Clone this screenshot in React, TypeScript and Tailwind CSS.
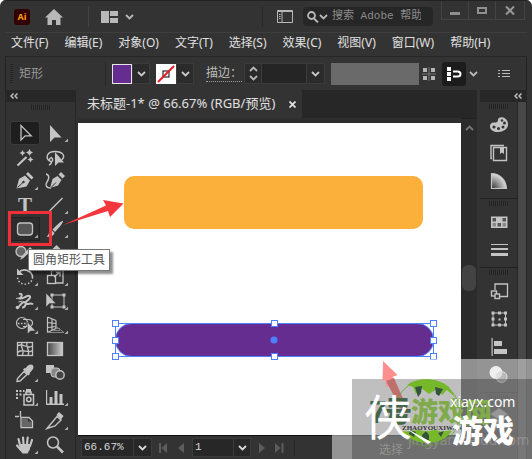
import React from "react";

const MENUS = [
  "文件(F)",
  "编辑(E)",
  "对象(O)",
  "文字(T)",
  "选择(S)",
  "效果(C)",
  "视图(V)",
  "窗口(W)",
  "帮助(H)",
];

interface Tool {
  name: string;
  icon: React.ReactNode;
  more?: boolean;
  active?: boolean;
}

const TOOLS: Tool[] = [
  {
    name: "选择工具",
    active: true,
    icon: <path d="M8 4.5v14.5l4.2-4.2h6z" fill="none" stroke="#c4c4c4" strokeWidth="1.3" />,
  },
  {
    name: "直接选择工具",
    more: true,
    icon: <path d="M7 4v17l4.5-4.5h7z" />,
  },
  {
    name: "魔棒工具",
    icon: (
      <>
        <path d="M4.5 20.5L13.5 12" stroke="#c4c4c4" strokeWidth="2.2" />
        <path d="M9.5 5l1 2 2 1-2 1-1 2-1-2-2-1 2-1zM16.5 4l1.2 2.3L20 7.5l-2.3 1.2L16.5 11l-1.2-2.3L13 7.5l2.3-1.2zM17.5 11.500l1 2 2 1-2 1-1 2-1-2-2-1 2-1z" />
      </>
    ),
  },
  {
    name: "套索工具",
    icon: (
      <>
        <path
          d="M7.500 16.500C1.500 13 4 6.500 12 6.500s11 5 6.500 8.500M9 12.500c-3 0-3.500 4-1 4s2-3 .5-3.500M8.500 16.500c0 2-1 3-2.500 3.500"
          fill="none"
          stroke="#c4c4c4"
          strokeWidth="1.4"
        />
        <path d="M12 7v14l3.500-3.500H21z" />
      </>
    ),
  },
  {
    name: "钢笔工具",
    more: true,
    icon: (
      <>
        <path d="M3.500 19.500L6 10l6-3.500 5 5-3.500 6zM13 5l2-2 5.500 5.500-2 2z" />
        <path d="M4.500 18.500l5.500-5" stroke="#333" />
        <circle cx="10.5" cy="13" r="1.2" fill="#333" />
      </>
    ),
  },
  {
    name: "曲率工具",
    icon: (
      <>
        <path d="M3 5c4 1 3 5 1 8s-1 6 4 6" fill="none" stroke="#c4c4c4" strokeWidth="1.4" />
        <path d="M7 19l2.500-9 5-3 4 4-3.500 5.500zM15.500 5.500L18 3l4 4-2.500 2.500z" />
        <path d="M8 18.500l5-5" stroke="#333" />
      </>
    ),
  },
  {
    name: "文字工具",
    more: true,
    icon: (
      <text x="12" y="19" textAnchor="middle" fontFamily="Liberation Serif, serif" fontWeight="bold" fontSize="21">
        T
      </text>
    ),
  },
  {
    name: "直线段工具",
    more: true,
    icon: <path d="M6.500 18L19.500 5" stroke="#c4c4c4" strokeWidth="1.5" />,
  },
  {
    name: "圆角矩形工具",
    more: true,
    active: true,
    icon: <rect x="4.5" y="6" width="15" height="12" rx="3" fill="#555" stroke="#c4c4c4" strokeWidth="1.3" />,
  },
  {
    name: "画笔工具",
    more: true,
    icon: <path d="M20 4c1 1-6 9-8 11l-2.500-2.500C12 10 18.500 3 20 4zM9 13.500l2.500 2.500c-1 3-4 4.500-8 3.500 2.500-1 2-5 5.500-6z" />,
  },
  {
    name: "Shaper 工具",
    more: true,
    icon: (
      <>
        <circle cx="8" cy="10.5" r="5" fill="#666" stroke="#c4c4c4" strokeWidth="1.3" />
        <path d="M7 19l2-4 8-9 2.500 2.500-9 8.500z" />
      </>
    ),
  },
  {
    name: "橡皮擦工具",
    more: true,
    icon: <path d="M13.500 4l6 6-8 8-6-6z" />,
  },
  {
    name: "旋转工具",
    more: true,
    icon: (
      <>
        <path d="M5.500 7.500C11 2 19 6 19.500 12" fill="none" stroke="#c4c4c4" strokeWidth="1.6" />
        <path d="M19.500 12c0 9-14 10-15 .5" fill="none" stroke="#c4c4c4" strokeWidth="1.5" strokeDasharray="1.5 2" />
        <path d="M4 3.500v6.500h6.500z" />
      </>
    ),
  },
  {
    name: "比例缩放工具",
    more: true,
    icon: (
      <g fill="none" stroke="#c4c4c4" strokeWidth="1.3">
        <path d="M8.500 10V5.500H20V18h-7" />
        <rect x="4.5" y="10.5" width="8" height="8" />
        <path d="M11 12l5.500-4.500M13 7.500h4v4" />
      </g>
    ),
  },
  {
    name: "宽度工具",
    more: true,
    icon: (
      <>
        <path
          d="M6 5c4-1 3 3 1 4.500 4 1 8-5 10-2 1.500 2.500-6 5-4 7s5-2 7 1M3.500 18c3 2 4-5 7.500-5s1 6-2 5.500"
          fill="none"
          stroke="#c4c4c4"
          strokeWidth="2"
        />
        <path d="M3 9.500l5-1M5.500 13l4-1" stroke="#c4c4c4" />
        <circle cx="4.5" cy="18.5" r="1.8" />
      </>
    ),
  },
  {
    name: "自由变换工具",
    more: true,
    icon: (
      <>
        <rect x="9" y="6" width="12" height="12" fill="none" stroke="#c4c4c4" />
        <path d="M7.500 4.500h3v3h-3zM19.500 4.500h3v3h-3zM7.500 16.500h3v3h-3zM19.500 16.500h3v3h-3z" />
        <path d="M3 4v14l3.500-3.500H13z" stroke="#333" strokeWidth=".5" />
      </>
    ),
  },
  {
    name: "形状生成器工具",
    more: true,
    icon: (
      <>
        <circle cx="9" cy="10" r="5.5" fill="none" stroke="#c4c4c4" strokeWidth="1.2" />
        <path d="M10 6.500h5c6 0 6 7 0 7h-5" fill="none" stroke="#c4c4c4" strokeWidth="1.2" />
        <path d="M5 10.500h11" stroke="#c4c4c4" strokeWidth="1.5" strokeDasharray="1.5 1.5" />
        <path d="M14.500 9v12l3-3h5z" stroke="#333" strokeWidth=".5" />
      </>
    ),
  },
  {
    name: "透视网格工具",
    more: true,
    icon: (
      <g fill="none" stroke="#c4c4c4">
        <path d="M4.500 4v15.500M9 5.500v12M13 7.500v8M4.500 4l8.500 3.500M4.500 9.500l8.500 1M4.500 14.500l8.500-1M4.500 19.500l8.500-4" strokeWidth="1.2" />
        <path d="M13 13.500l8 6M9 17.500h8M6 19.500h15M13 15.500h4" stroke="#888" />
      </g>
    ),
  },
  {
    name: "网格工具",
    icon: (
      <g fill="none" stroke="#c4c4c4" strokeWidth="1.3">
        <rect x="4.5" y="5.5" width="15" height="13" />
        <path d="M4.500 9c5-4 10 4 15 0M4.500 15.500c5-5 10 2 15-2M9 5.500c-3 5 4 8 0 13M14 5.500c-2 5 4 7 1 13" />
      </g>
    ),
  },
  {
    name: "渐变工具",
    icon: (
      <>
        <defs>
          <linearGradient id="toolGradient">
            <stop offset="0" stopColor="#444" />
            <stop offset="1" stopColor="#ccc" />
          </linearGradient>
        </defs>
        <rect x="4.5" y="5.5" width="15" height="13" fill="url(#toolGradient)" stroke="#c4c4c4" strokeWidth="1.3" />
      </>
    ),
  },
  {
    name: "吸管工具",
    more: true,
    icon: (
      <>
        <path d="M11 10.500l3 3L7 20l-3 .5.500-3z" fill="none" stroke="#c4c4c4" strokeWidth="1.4" />
        <path d="M10 8.500l1.500-1.500 1 .5C14 5 16 3.500 18 3.500c2.500 0 3 3 2 4.500s-2.500 3-3.500 4l.5 1-1.500 1.500z" />
      </>
    ),
  },
  {
    name: "混合工具",
    icon: (
      <>
        <rect x="3" y="4" width="8" height="8" />
        <rect x="8" y="7" width="9" height="9" rx="3" fill="#888" stroke="#c4c4c4" />
        <circle cx="17" cy="14" r="4.2" fill="#444" stroke="#c4c4c4" strokeWidth="1.4" />
      </>
    ),
  },
  {
    name: "符号喷枪工具",
    more: true,
    icon: (
      <>
        <path d="M3 5h2v2H3zM6.500 5h2v2h-2zM3 8.500h2v2H3zM6.500 8.500h2v2h-2zM3 12h2v2H3zM10 5h1.500v2H10zM13 4h5v3h-5z" />
        <path d="M11 9.500h9.500V20H11zM13 9V7h5v2" fill="none" stroke="#c4c4c4" strokeWidth="1.5" />
        <circle cx="15.8" cy="14.5" r="2.2" fill="none" stroke="#c4c4c4" strokeWidth="1.5" />
      </>
    ),
  },
  {
    name: "柱形图工具",
    more: true,
    icon: <path d="M3 5h1.200v13.500H21V20H3zM6.500 12h3v7h-3zM11.500 6h3v13h-3zM16.500 9h3v10h-3z" />,
  },
  {
    name: "画板工具",
    icon: (
      <>
        <path d="M7.500 2v6M2 7.500h4M8 8.500h8l3.500 3.500v6.500H8z" fill="none" stroke="#c4c4c4" strokeWidth="1.3" />
        <path d="M9 9.500h6v3h4V18H9z" fill="#666" />
      </>
    ),
  },
  {
    name: "切片工具",
    more: true,
    icon: (
      <>
        <path d="M4 19.500L14 7.500l4 3.500-6 6z" fill="none" stroke="#c4c4c4" strokeWidth="1.4" />
        <path d="M13.500 6L16 3l4.500 4-2.500 3.500z" />
      </>
    ),
  },
  {
    name: "抓手工具",
    more: true,
    icon: (
      <>
        <path d="M7 12L5.500 6M10.500 11L10 4.500M14 11l.7-6.500M17 13l2-6M8 17l-4-4.500" stroke="#c4c4c4" strokeWidth="2.2" strokeLinecap="round" />
        <path d="M6.500 11h11.300l-1 5.500-2.300 4H9.500L6 16z" />
      </>
    ),
  },
  {
    name: "缩放工具",
    icon: (
      <>
        <circle cx="10" cy="9.5" r="5.5" fill="none" stroke="#c4c4c4" strokeWidth="1.5" />
        <path d="M14 13.500l6 6" stroke="#c4c4c4" strokeWidth="2.5" />
      </>
    ),
  },
];

const DOCK: Tool[][] = [
  [
    {
      name: "颜色",
      icon: (
        <>
          <path d="M3 13.500C3 10 5.500 9.500 7.500 9.500c2 0 3.500-.5 3.500-2.500S13 4 16 4.500s5.500 4 5 7.500c-.5 4-4.500 7-10 7-4.500 0-8-2-8-5.500z" />
          <g fill="#333">
            <circle cx="7" cy="14" r="1.6" />
            <circle cx="11.5" cy="15.5" r="1.5" />
            <circle cx="16" cy="14" r="1.5" />
            <circle cx="17.5" cy="10" r="1.5" />
            <circle cx="15" cy="7.5" r="1.2" />
          </g>
        </>
      ),
    },
    {
      name: "库",
      icon: (
        <>
          <path d="M5 17.500H4v-13h13M7 6.500h12.500v13H6.500V6.500z" fill="none" stroke="#c4c4c4" strokeWidth="1.4" />
          <path d="M13 6h4v7l-2-1.500-2 1.500z" />
        </>
      ),
    },
    {
      name: "颜色参考",
      icon: (
        <>
          <defs>
            <radialGradient id="dockGuide" cx="0" cy="1" r="1">
              <stop offset="0" stopColor="#333" />
              <stop offset="1" stopColor="#ddd" />
            </radialGradient>
          </defs>
          <path d="M4.500 4.500c8 0 14.500 6 15 15h-15z" fill="url(#dockGuide)" stroke="#c4c4c4" strokeWidth="1.2" />
        </>
      ),
    },
  ],
  [
    {
      name: "色板",
      icon: (
        <>
          <path d="M4 6.500h16.500v11.500H4z" />
          <path d="M5.500 8h3.500v3.500H5.500zM15.500 8H19v3.500h-3.500zM10.500 13H14v3.500h-3.500z" fill="#555" />
          <path d="M5.500 13h3.500v3.500H5.500zM15.500 13H19v3.500h-3.500z" fill="#888" />
        </>
      ),
    },
    {
      name: "描边",
      icon: <path d="M4 6h17v1H4zM4 10h17v2H4zM4 15h17v3H4z" />,
    },
  ],
  [
    {
      name: "资源导出",
      icon: (
        <>
          <path d="M8 11V5h12.500v12.500H13" fill="none" stroke="#c4c4c4" strokeWidth="1.3" />
          <rect x="4.5" y="12" width="5" height="5" fill="#333" stroke="#c4c4c4" strokeWidth="1.4" />
          <rect x="8" y="15" width="4.5" height="4.5" fill="#333" stroke="#c4c4c4" strokeWidth="1.4" />
        </>
      ),
    },
    {
      name: "变换",
      icon: (
        <>
          <rect x="6" y="6" width="12.5" height="12" fill="none" stroke="#c4c4c4" />
          <path d="M4.500 4.500h3v3h-3zM11 4.500h3v3h-3zM17 4.500h3v3h-3zM4.500 10.500h3v3h-3zM17 10.500h3v3h-3zM4.500 16.500h3v3h-3zM11 16.500h3v3h-3zM17 16.500h3v3h-3zM11.500 11.500h2v2h-2z" />
        </>
      ),
    },
    {
      name: "对齐",
      icon: <path d="M4.500 3h1.200v18H4.500zM7 6h8v5H7zM7 14h13v5H7z" />,
    },
    {
      name: "透明度",
      icon: (
        <>
          <circle cx="9" cy="9.5" r="6.5" fill="#e0e0e0" />
          <circle cx="14.5" cy="14" r="5.5" fill="#aaa" fillOpacity=".6" stroke="#c4c4c4" />
        </>
      ),
    },
  ],
  [
    {
      name: "图层",
      icon: <path d="M12 4l9 6-9 6-9-6zM3 14l9 6 9-6" fill="#999" stroke="#555" />,
    },
  ],
];

function Chevron({ up }: { up?: boolean }) {
  return (
    <svg
      width="9"
      height="6"
      viewBox="0 0 9 6"
      fill="none"
      stroke="currentColor"
      strokeWidth="1.8"
      className="shrink-0"
    >
      <path d={up ? "M1 5l3.500-3.500L8 5" : "M1 1l3.500 3.500L8 1"} />
    </svg>
  );
}

function Collapse() {
  return (
    <svg width="8" height="6" viewBox="0 0 8 6" fill="none" stroke="#bbb" strokeWidth="1.5">
      <path d="M3.500.5L1 3l2.500 2.500M7.500.5L5 3l2.500 2.500" />
    </svg>
  );
}

function Grip() {
  return <div className="h-[5px] w-5 bg-[repeating-linear-gradient(90deg,#222_0_1px,#363636_1px_2px)]" />;
}

function DropButton({ label }: { label: string }) {
  return (
    <button
      aria-label={label}
      className="flex h-[21px] w-[18px] items-center justify-center border border-[#3b3b3b] bg-[#2b2b2b] text-[#c8c8c8]"
    >
      <Chevron />
    </button>
  );
}

function TitleBar() {
  return (
    <header className="flex h-8 items-center border-t border-[#222] pl-3.5">
      <span className="flex h-4 w-4 items-center justify-center rounded-[3px] bg-[#330000] text-[9px] font-bold text-[#ff9a00]">
        Ai
      </span>
      <button aria-label="主页" className="ml-3.5">
        <svg width="20" height="16" viewBox="0 0 20 16" fill="#b8b8b8">
          <path d="M10 0l9 8.500h-2.500V16H12v-5H8v5H3.500V8.500H1z" />
        </svg>
      </button>
      <span className="ml-6 h-5 w-px bg-[#444]" />
      <button aria-label="排列文档" className="ml-3 flex items-center gap-1.5 text-[#b8b8b8]">
        <svg width="18" height="12" viewBox="0 0 18 12" fill="#b8b8b8">
          <path d="M0 0h8v12H0zM9 0h8v5H9zM9 7h8v5H9z" />
        </svg>
        <Chevron />
      </button>
      <span className="flex-1" />
      <span className="h-5 w-px bg-[#282828]" />
      <button aria-label="切换工作区" className="ml-3.5">
        <svg width="16" height="13" viewBox="0 0 16 13" fill="none" stroke="#b8b8b8">
          <path d="M.5.5h15v12H.5zM.5 1.500h15M5 1v11M2 4.500h1.500M2 6.500h1.500M2 8.500h1.500" />
        </svg>
      </button>
      <label className="ml-2.5 flex h-[19px] w-[130px] items-center rounded-sm bg-[#262626] pl-1 text-[#b8b8b8]">
        <svg
          width="12"
          height="12"
          viewBox="0 0 12 12"
          fill="none"
          stroke="#b8b8b8"
          strokeWidth="1.8"
          className="shrink-0"
        >
          <circle cx="4.5" cy="4.5" r="3.5" />
          <path d="M7 7.500l4 4" />
        </svg>
        <Chevron />
        <input
          type="search"
          aria-label="搜索 Adobe 帮助"
          placeholder="搜索 Adobe 帮助"
          className="ml-1 w-full min-w-0 bg-transparent font-['Liberation_Mono','Noto_Sans_CJK_SC',monospace] text-[11px] outline-none placeholder:text-[#8c8c8c]"
        />
      </label>
      <div className="mr-[7px] ml-2 flex h-[19px] self-start border-x border-b border-[#444] text-[#8f8f8f]">
        <button aria-label="最小化" className="flex w-[27px] items-center justify-center border-r border-[#444]">
          <span className="mt-1.5 h-[3px] w-2.5 bg-[#8f8f8f]" />
        </button>
        <button aria-label="最大化" className="flex w-[27px] items-center justify-center border-r border-[#444]">
          <span className="h-[7px] w-2.5 border-2 border-[#8f8f8f]" />
        </button>
        <button aria-label="关闭" className="flex w-[28px] items-center justify-center">
          <svg width="10" height="9" viewBox="0 0 10 9" stroke="#999" strokeWidth="2">
            <path d="M1 .5l8 8M9 .5l-8 8" />
          </svg>
        </button>
      </div>
    </header>
  );
}

function ControlBar() {
  return (
    <div className="mx-[5px] flex h-[34px] items-center border-x border-t border-[#222] border-t-[#262626] pl-1 text-xs">
      <span className="h-5 w-[3px] bg-[repeating-linear-gradient(#222_0_1px,#363636_1px_2px)]" />
      <span className="ml-1.5 w-[86px] text-[#999]">矩形</span>
      <span className="h-6 w-px bg-[#282828]" />
      <button aria-label="填色" className="ml-1.5 h-5 w-5 border border-[#e6e6e6] bg-[#662d91]" />
      <DropButton label="填色选项" />
      <button aria-label="描边颜色" className="ml-1.5 h-5 w-5 bg-white">
        <svg width="20" height="20" viewBox="0 0 20 20" fill="none">
          <rect x="7" y="7" width="6" height="6" stroke="#000" />
          <path d="M2 18L18 2" stroke="#e81c24" strokeWidth="2" />
        </svg>
      </button>
      <DropButton label="描边选项" />
      <label
        htmlFor="stroke"
        className="ml-3 border-b border-dotted border-[#999] leading-4 whitespace-nowrap text-[#bdbdbd]"
      >
        描边：
      </label>
      <div className="ml-0.5 flex h-[21px] border border-[#3b3b3b] bg-[#2b2b2b] text-[#b8b8b8]">
        <div className="flex w-4 flex-col items-center justify-between py-0.5">
          <button aria-label="增加">
            <Chevron up />
          </button>
          <button aria-label="减少">
            <Chevron />
          </button>
        </div>
        <input id="stroke" className="w-[46px] border-x border-[#3b3b3b] bg-[#252525] outline-none" />
        <button aria-label="描边粗细" className="flex w-[17px] items-center justify-center text-[#c8c8c8]">
          <Chevron />
        </button>
      </div>
      <div className="ml-1.5 h-[22px] flex-1 bg-[#6a6a6a]" />
      <button aria-label="参考点" className="ml-[3px]">
        <svg width="14" height="14" viewBox="0 0 14 14" fill="#b5b5b5">
          <path d="M1 1h4v4H1zM9 1h4v4H9zM1 9h4v4H1zM9 9h4v4H9z" />
          <path d="M7 0v14M0 7h14" stroke="#777" />
        </svg>
      </button>
      <button aria-label="对齐像素" className="ml-1.5 flex h-6 w-6 items-center justify-center rounded-[3px] bg-[#1c1c1c]">
        <svg width="15" height="14" viewBox="0 0 15 14" fill="#fff">
          <path d="M0 0h4v4H0zM0 5h4v4H0zM0 10h4v4H0z" />
          <path d="M6 4.500h4.500c4 0 4 5 0 5H6" fill="none" stroke="#fff" strokeWidth="2" />
        </svg>
      </button>
      <button aria-label="对齐选项" className="ml-[3px] text-[#b8b8b8]">
        <Chevron />
      </button>
      <button aria-label="面板菜单" className="mr-4 ml-5">
        <svg width="12" height="9" viewBox="0 0 12 9" fill="none" stroke="#bbb">
          <path d="M0 1.500h2M4 1.500h8M0 4.500h2M4 4.500h8M0 7.500h2M4 7.500h8" />
        </svg>
      </button>
    </div>
  );
}

function ToolBox() {
  return (
    <aside className="flex w-[71px] shrink-0 flex-col border-x border-[#262626]">
      <div className="flex h-3 items-center bg-[#272727] pl-1">
        <Collapse />
      </div>
      <div className="flex h-[19px] justify-center pt-[3px]">
        <Grip />
      </div>
      <div className="grid grid-cols-[30px_30px] pb-0.5 pl-1">
        {TOOLS.map((tool, i) => (
          <button
            key={tool.name}
            aria-label={tool.name}
            className={
              tool.active
                ? i === 0
                  ? "flex h-6 items-center justify-center rounded-[3px] border border-[#3a3a3a] bg-[#1e1e1e]"
                  : "flex h-6 items-center justify-center border border-[#222] bg-[#2c2c2c]"
                : "flex h-6 items-center justify-center"
            }
          >
            <svg width="28" height="24" viewBox="-2 0 28 24" fill="#c4c4c4" className="shrink-0">
              {tool.icon}
              {tool.more ? <path d="M25 17.500v3.500h-3.500z" fill="#aaa" /> : null}
            </svg>
          </button>
        ))}
      </div>
    </aside>
  );
}

function Artwork() {
  const handles = [
    [37.5, 200.5],
    [196.5, 200.5],
    [355.5, 200.5],
    [37.5, 217.5],
    [355.5, 217.5],
    [37.5, 233.5],
    [196.5, 233.5],
    [355.5, 233.5],
  ];
  return (
    <svg width="383" height="312" viewBox="0 0 383 312" className="block shrink-0">
      <rect x="46" y="53" width="299" height="53" rx="10" fill="#fbb03b" />
      <rect x="37.5" y="200.5" width="318" height="33" rx="16" fill="#662d91" stroke="#4f80ff" />
      <rect x="37.5" y="200.5" width="318" height="33" fill="none" stroke="#4f80ff" />
      <circle cx="196" cy="217" r="3.5" fill="#4f80ff" />
      {handles.map(([x, y]) => (
        <rect key={`${x}-${y}`} x={x - 3} y={y - 3} width="6" height="6" fill="#fff" stroke="#4f80ff" />
      ))}
    </svg>
  );
}

function StatusBar() {
  return (
    <footer className="flex h-6 items-center border-t border-[#111] bg-[#333] pl-[3px] font-['Liberation_Mono',monospace] text-[11px] text-[#d8d8d8]">
      <div className="flex h-[19px] border border-[#3b3b3b] bg-[#272727]">
        <input aria-label="缩放比例" defaultValue="66.67%" className="w-[51px] pl-0.5 outline-none" />
        <button aria-label="缩放选项" className="flex w-[18px] items-center justify-center border-l border-[#3b3b3b]">
          <Chevron />
        </button>
      </div>
      <div className="ml-[7px] flex gap-2.5 text-[#5c5c5c]">
        <button aria-label="首项">
          <svg width="9" height="10" viewBox="0 0 9 10" fill="currentColor">
            <path d="M0 0h2v10H0zM8 0v10L2.500 5z" />
          </svg>
        </button>
        <button aria-label="上一项">
          <svg width="6" height="10" viewBox="0 0 6 10" fill="currentColor">
            <path d="M6 0v10L0 5z" />
          </svg>
        </button>
      </div>
      <div className="ml-2 flex h-[19px] border border-[#3b3b3b] bg-[#272727]">
        <input aria-label="画板" defaultValue="1" className="w-10 pl-0.5 outline-none" />
        <button aria-label="画板列表" className="flex w-[17px] items-center justify-center border-l border-[#3b3b3b]">
          <Chevron />
        </button>
      </div>
      <div className="ml-2 flex gap-2.5 text-[#5c5c5c]">
        <button aria-label="下一项">
          <svg width="6" height="10" viewBox="0 0 6 10" fill="currentColor">
            <path d="M0 0v10l6-5z" />
          </svg>
        </button>
        <button aria-label="末项">
          <svg width="9" height="10" viewBox="0 0 9 10" fill="currentColor">
            <path d="M0 0v10l5.500-5zM6.500 0h2v10h-2z" />
          </svg>
        </button>
      </div>
      <span className="ml-2.5 h-4 w-px bg-[#272727]" />
    </footer>
  );
}

function DocumentArea() {
  return (
    <main className="ml-0.5 flex min-w-0 flex-1 flex-col bg-[#272727]">
      <div className="flex h-7">
        <div className="flex items-center gap-3.5 bg-[#333] pr-1.5 pl-[9px] text-[#e0e0e0]">
          <h1 className="text-[13px] whitespace-nowrap">未标题-1* @ 66.67% (RGB/预览)</h1>
          <button aria-label="关闭文档">
            <svg width="7" height="7" viewBox="0 0 7 7" stroke="#e0e0e0" strokeWidth="1.8">
              <path d="M.5.5l6 6M6.500.5l-6 6" />
            </svg>
          </button>
        </div>
      </div>
      <div className="flex flex-1">
        <div className="min-w-0 flex-1 border-t-[5px] border-[#2e2e2e] bg-white">
          <Artwork />
        </div>
        <div className="flex w-4 flex-col items-center border-t border-[#222] bg-[#2b2b2b] pt-1.5 pb-1 text-[#777]">
          <button aria-label="向上滚动" className="flex">
            <Chevron up />
          </button>
          <span className="flex-1" />
          <span className="h-[26px] w-3.5 rounded-[6px] bg-[#434343]" />
          <span className="flex-1" />
          <button aria-label="向下滚动" className="flex">
            <Chevron />
          </button>
        </div>
      </div>
      <StatusBar />
    </main>
  );
}

function Dock() {
  return (
    <aside className="ml-[3px] flex w-[47px] shrink-0 flex-col">
      <div className="flex h-3 items-center justify-end bg-[#272727] pr-[5px]">
        <Collapse />
      </div>
      <div className="flex flex-1">
        <div className="w-[38px] border-r border-[#262626]">
          {DOCK.map((group) => (
            <div key={group[0].name} className="flex flex-col items-center border-b border-[#222] pb-[3px]">
              <div className="flex h-[9px] items-center">
                <Grip />
              </div>
              {group.map((panel) => (
                <button key={panel.name} aria-label={panel.name} className="flex h-7 items-center">
                  <svg width="24" height="24" viewBox="0 0 24 24" fill="#c4c4c4">
                    {panel.icon}
                  </svg>
                </button>
              ))}
            </div>
          ))}
        </div>
        <div className="flex-1 border-r border-[#262626] bg-[#484848]" />
      </div>
    </aside>
  );
}

// Red frame, arrow and tooltip lying over the toolbox
function Callout() {
  return (
    <>
      <svg width="130" height="60" viewBox="0 0 130 60" className="pointer-events-none absolute top-[195px] left-0">
        <path d="M63 30l43-19.500-3-5.500 20.500 3.500L110 22l-2-6z" fill="#f4363d" />
        <rect x="9.5" y="17.5" width="41" height="32" fill="none" stroke="#f03038" strokeWidth="3" />
      </svg>
      <div
        role="tooltip"
        className="absolute top-[249px] left-7 border border-[#777] bg-white px-1 text-xs leading-5 whitespace-nowrap text-[#555] shadow-[3px_3px_2px_#00000070]"
      >
        圆角矩形工具
      </div>
    </>
  );
}

function Watermark() {
  return (
    <svg
      width="200"
      height="100"
      viewBox="0 0 200 100"
      className="pointer-events-none absolute top-[359px] right-0"
      fontFamily="Noto Sans, Noto Sans CJK SC, sans-serif"
    >
      <rect width="200" height="100" fill="#fff" fillOpacity=".48" />
      <rect x="20" y="20" width="180" height="80" fill="#000" fillOpacity=".25" />
      <path d="M51 2l14.500 14-5 2 3 6-9 4-1-7-3 1z" fill="#ff8e8e" />
      <path d="M54 22l8-3 14 32-5 3z" fill="#c0706c" />
      <text x="47" y="95" fontSize="12" fill="#fff" fillOpacity=".25">
        选择
      </text>
      <text x="76" y="86" fontSize="14" fill="#fff" fillOpacity=".22">
        jingyan.baidu.com
      </text>
      <circle cx="95" cy="54" r="33" fill="none" stroke="#6f9c3c" strokeWidth=".8" />
      <path d="M75 26c10-8 31-8 42 2l6 10-8-7-5 5-5-6-8 5-8-6-5 6-3-7z" fill="#76b82a" />
      <path d="M68 72c14 14 38 18 52 0-4-2-9 2-13 0-6-3-11 2-16 0-6-3-12 2-23 0z" fill="#76b82a" />
      <path d="M83 28l7-1-1 7-3 4zM103 28l8 2-4 7-3-2zM78 71l6 2-2 5-5-3zM90 76l4-4 3 4v5h-6zM106 74l6-2-3 6z" fill="#34533a" />
      <text x="37" y="64" fontSize="32" fontWeight="900" fill="#44654a" fontFamily="Liberation Sans, Noto Sans CJK SC, sans-serif">
        7
      </text>
      <text x="52" y="63" fontSize="28" fontWeight="900" fill="#44654a">
        号
      </text>
      <text x="79" y="63" fontSize="27" fontWeight="900" fill="#7fab4d">
        游戏网
      </text>
      <text x="32" y="76" fontSize="48" fontWeight="400" fill="#fff">
        侠
      </text>
      <path d="M72 68l27 15-3 2z" fill="#fff" />
      <text x="70" y="71" fontSize="7" fontWeight="bold" fill="#333" fontFamily="Liberation Serif, serif">
        ZHAOYOUXIWANG
      </text>
      <text x="118" y="48" fontSize="14" fill="#fff">
        xiayx.com
      </text>
      <text x="120" y="83" fontSize="31" fontWeight="900" fill="#fff">
        游戏
      </text>
    </svg>
  );
}

export default function App() {
  return (
    <div className="relative flex min-h-screen flex-col overflow-hidden rounded-t-md bg-[#333] font-['Noto_Sans','Noto_Sans_CJK_SC',sans-serif]">
      <TitleBar />
      <nav className="mx-[5px] flex h-6 items-center gap-4 border-t border-[#3e3e3e] pb-1 pl-1.5 text-xs whitespace-nowrap text-[#e0e0e0]">
        {MENUS.map((menu) => (
          <button key={menu}>{menu}</button>
        ))}
      </nav>
      <ControlBar />
      <div className="mx-[5px] flex flex-1">
        <ToolBox />
        <DocumentArea />
        <Dock />
      </div>
      <Callout />
      <Watermark />
    </div>
  );
}
